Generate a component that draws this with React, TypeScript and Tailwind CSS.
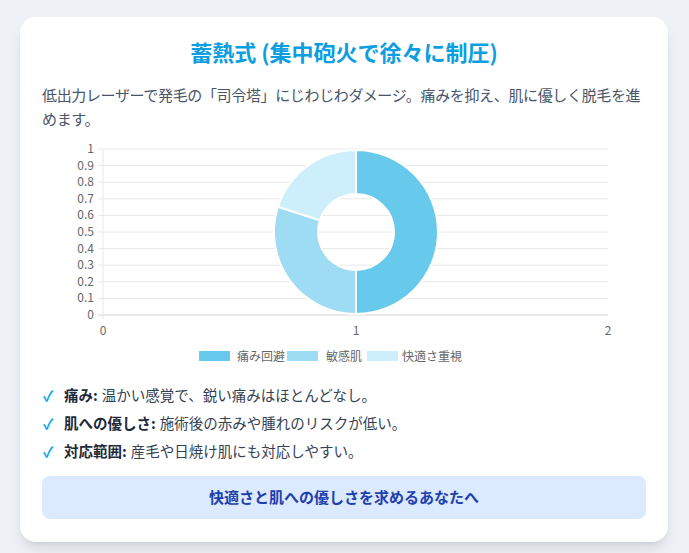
export default function App() {
  const ticks = [1, 0.9, 0.8, 0.7, 0.6, 0.5, 0.4, 0.3, 0.2, 0.1, 0];
  const font = '"Noto Sans CJK JP", "Noto Sans", sans-serif';
  const items: [string, string][] = [
    ["痛み:", "温かい感覚で、鋭い痛みはほとんどなし。"],
    ["肌への優しさ:", "施術後の赤みや腫れのリスクが低い。"],
    ["対応範囲:", "産毛や日焼け肌にも対応しやすい。"],
  ];
  return (
    <div className="min-h-[553px] w-[689px] bg-[#eef2f7] pt-[17px] pl-[20px]" style={{ fontFamily: font }}>
      <div className="w-[648px] h-[525px] bg-white rounded-[16px] shadow-lg px-[22px] pt-[20px]">
        <h2 className="text-center text-[22px] font-bold text-[#0c9ee0] leading-[28px]">蓄熱式 (集中砲火で徐々に制圧)</h2>
        <p className="mt-[18px] text-[15px] leading-[24px] text-[#475569] tracking-[-0.35px] -mr-[4px]">
          低出力レーザーで発毛の「司令塔」にじわじわダメージ。痛みを抑え、肌に優しく脱毛を進めます。
        </p>
        <svg width="604" height="236" className="mt-[8px] block" style={{ fontFamily: font }}>
          {ticks.map((t, i) => {
            const y = 10 + i * 16.6;
            return (
              <g key={i}>
                <line x1={56} x2={566} y1={y} y2={y} stroke={i === 10 ? "#d4d4d4" : "#e8e8e8"} strokeWidth={1} />
                <text x={52} y={y + 4} textAnchor="end" fontSize="12" fill="#666">{t}</text>
              </g>
            );
          })}
          <line x1={61} x2={61} y1={10} y2={180} stroke="#e8e8e8" />
          <text x={61} y={196} textAnchor="middle" fontSize="12" fill="#666">0</text>
          <text x={314} y={196} textAnchor="middle" fontSize="12" fill="#666">1</text>
          <text x={566} y={196} textAnchor="middle" fontSize="12" fill="#666">2</text>
          <g stroke="#fff" strokeWidth="2">
            <path d="M314,11 A82,82 0 0 1 314,175 L314,131 A38,38 0 0 0 314,55 Z" fill="#67c9ec" />
            <path d="M314,175 A82,82 0 0 1 236,67.7 L277.9,81.3 A38,38 0 0 0 314,131 Z" fill="#9ddcf2" />
            <path d="M236,67.7 A82,82 0 0 1 314,11 L314,55 A38,38 0 0 0 277.9,81.3 Z" fill="#cdeefb" />
          </g>
          <rect x={157} y={212} width={31} height={10} fill="#67c9ec" />
          <text x={195} y={221.5} fontSize="12" fill="#666">痛み回避</text>
          <rect x={245} y={212} width={31} height={10} fill="#9ddcf2" />
          <text x={284} y={221.5} fontSize="12" fill="#666">敏感肌</text>
          <rect x={325} y={212} width={31} height={10} fill="#cdeefb" />
          <text x={360} y={221.5} fontSize="12" fill="#666">快適さ重視</text>
        </svg>
        <ul className="mt-[9px] flex flex-col gap-[7px]">
          {items.map(([b, t], i) => (
            <li key={i} className="flex items-center text-[14.5px] leading-[21px] text-[#334155]">
              <span className="text-[#0ea5e9] font-bold w-[22px] pl-[1px]">✓</span>
              <b className="font-bold text-[#1e293b]">{b}</b>
              <span className="ml-[4px]">{t}</span>
            </li>
          ))}
        </ul>
        <div className="mt-[15px] h-[43px] rounded-[8px] bg-[#dbeafe] flex items-center justify-center text-[15px] font-bold text-[#1e40af]">
          快適さと肌への優しさを求めるあなたへ
        </div>
      </div>
    </div>
  );
}
